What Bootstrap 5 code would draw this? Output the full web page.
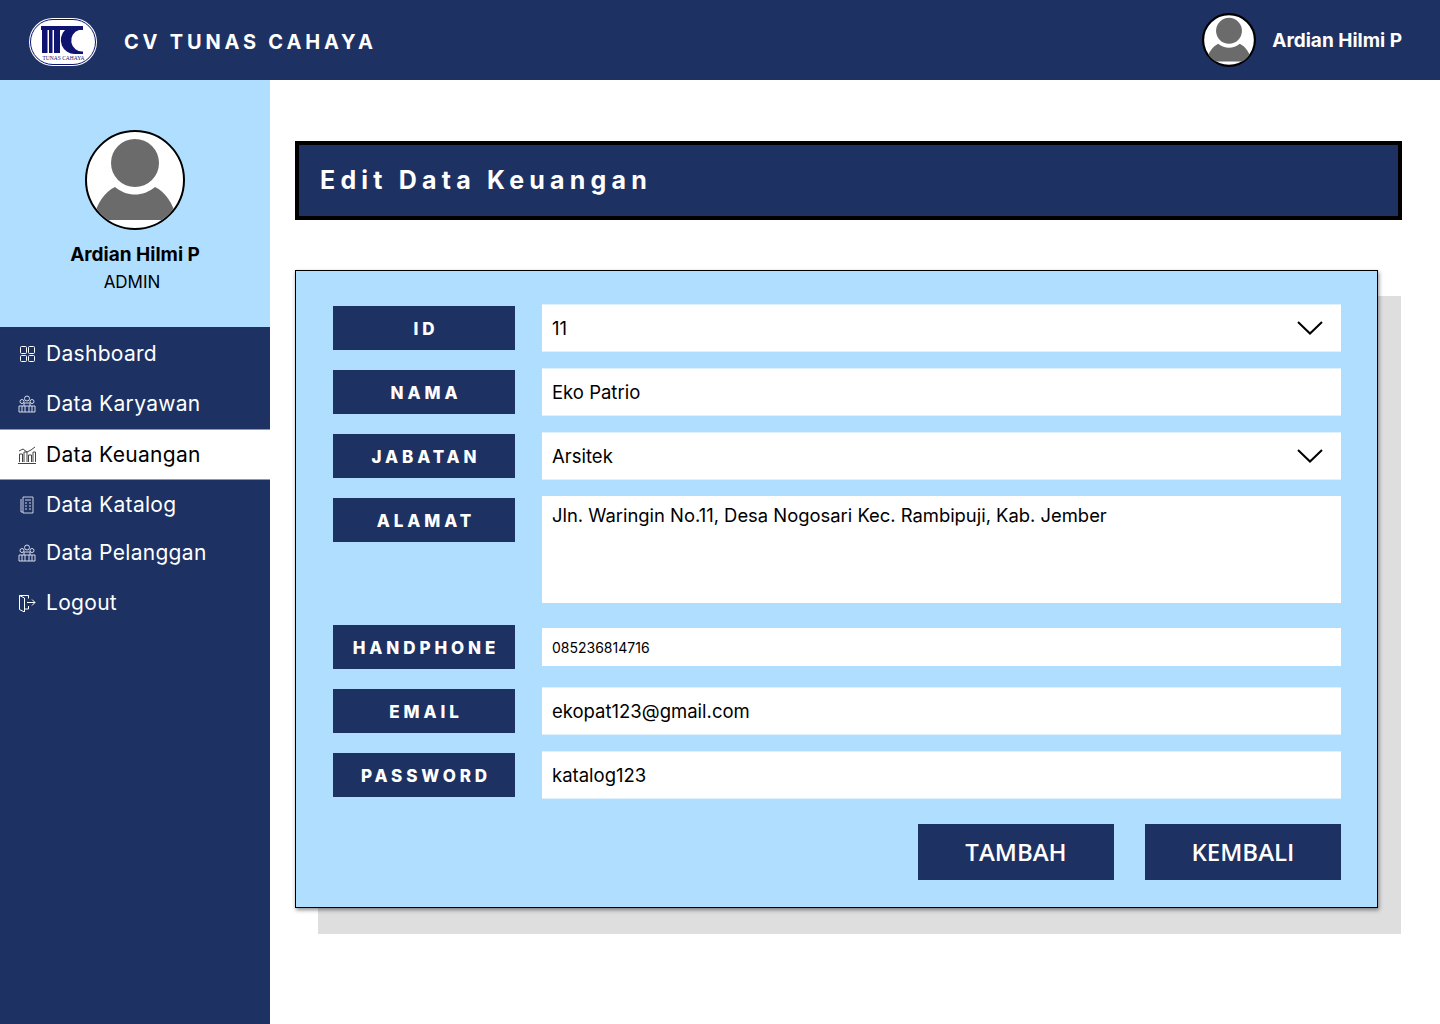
<!DOCTYPE html>
<html lang="en">
<head>
    <meta charset="UTF-8">
    <meta name="viewport" content="width=device-width, initial-scale=1.0">
    <title>Edit Data Keuangan</title>
    <link href="https://cdn.jsdelivr.net/npm/bootstrap@5.3.0/dist/css/bootstrap.min.css" rel="stylesheet">
    <style>
        body { font-family: Inter, "Noto Sans", sans-serif; background: #fff; color: #000; min-height: 1024px; }
        .top-bar { height: 80px; background: #1e3163; padding: 0 38px 0 29px; }
        .brand-logo { margin-top: 4px; }
        .brand-name { font-size: 20px; font-weight: 700; letter-spacing: 3.8px; margin: 4px 0 0 27px; color: #fff; }
        .top-user { font-size: 19px; font-weight: 700; color: #fff; margin-left: 16px; padding-top: 2px; }
        .side-bar { width: 270px; height: 944px; background: #1e3163; flex-shrink: 0; }
        .side-profile { height: 247px; background: #b0deff; padding-top: 50px; text-align: center; }
        .side-name { font-size: 19px; font-weight: 700; margin-top: 13px; line-height: 24px; }
        .side-role { font-size: 17px; line-height: 24px; margin-top: 3px; padding-right: 6px; }
        .side-link { height: 50px; padding-left: 18px; color: #fff; font-size: 21px; letter-spacing: .3px; text-decoration: none; gap: 10px; }
        .side-link:hover { color: #fff; }
        .side-link.active-link { background: #fff; color: #000; border-top: 1px solid #8c98b5; border-bottom: 1px solid #8c98b5; height: 51px; }
        .side-menu { padding-top: 2px; }
        .main-area { padding: 61px 38px 0 25px; }
        .page-title { height: 79px; background: #1e3163; border: 4px solid #000; color: #fff; font-size: 25px; font-weight: 700; letter-spacing: 5.2px; padding-left: 21px; }
        .form-panel { width: 1083px; height: 638px; margin-top: 50px; padding: 35px 36px 0 37px; background: #b0deff; border: 1px solid #000; box-shadow: 1px 2px 4px rgba(0,0,0,.45), 23px 26px 0 #dedede; }
        .form-line { height: 44px; margin-bottom: 20px; gap: 27px; }
        .form-line.tall { height: 105px; margin-bottom: 22px; }
        .field-label { width: 182px; height: 44px; flex-shrink: 0; padding: 4px 0 0 4px; background: #1e3163; color: #fff; font-size: 17px; font-weight: 800; letter-spacing: 3.9px; }
        .field-input { height: 48px; margin-top: -2px; border: solid #dff1ff; border-width: 1px 0; border-radius: 0; padding: 0 10px; font-size: 18.5px; color: #000; box-shadow: none; }
        .field-input.form-select { padding: 2px 48px 0 10px; background-position: right 18px center; background-size: 26px 14px; background-image: url("data:image/svg+xml,%3Csvg xmlns='http://www.w3.org/2000/svg' viewBox='0 0 26 14'%3E%3Cpath d='M1 1l12 11.500L25 1' fill='none' stroke='%23000' stroke-width='2'/%3E%3C/svg%3E"); }
        textarea.field-input { height: 107px; margin-top: -2px; padding-top: 6px; border: 0; resize: none; line-height: 26px; font-size: 18.4px; }
        .field-input.small-text { height: 38px; margin-top: 3px; border: 0; font-size: 14px; }
        .action-btn { width: 196px; height: 56px; background: #1e3163; color: #fff; border: 0; border-radius: 0; font-family: "Open Sans", sans-serif; font-size: 24px; font-weight: 600; }
        .action-btn:hover { background: #1e3163; color: #fff; }
        .action-row { gap: 31px; margin-top: 27px; }
    </style>
</head>
<body>
    <nav class="top-bar d-flex align-items-center">
        <svg class="brand-logo" width="68" height="48" viewBox="0 0 68 48">
            <rect x="0" y="0" width="68" height="48" rx="24" fill="#fff"/>
            <rect x="1.500" y="1.500" width="65" height="45" rx="22.500" fill="#fff" stroke="#0e1470"/>
            <rect x="12" y="8" width="42" height="4" fill="#0e1470"/>
            <path d="M13 12h5.500v23H13zM20 12h3.500v23H20zM25 12h6v23h-6z" fill="#0e1470"/>
            <path d="M36 12H50A11 11 0 0 0 54 33.500V36H46A14 14 0 0 1 36 12z" fill="#0e1470"/>
            <text x="34.500" y="42" text-anchor="middle" font-family="Liberation Serif, serif" font-size="5.500" fill="#0e1470">TUNAS CAHAYA</text>
        </svg>
        <span class="brand-name">CV TUNAS CAHAYA</span>
        <svg class="ms-auto" width="54" height="54" viewBox="0 0 100 100">
            <clipPath id="topClip"><circle cx="50" cy="50" r="47"/></clipPath>
            <circle cx="50" cy="50" r="48" fill="#fff" stroke="#000" stroke-width="4"/>
            <circle cx="50" cy="33" r="24" fill="#6b6b6b"/>
            <path clip-path="url(#topClip)" d="M30 57C42 67 58 67 70 57C80 62 88 72 92 90H8C12 72 20 62 30 57z" fill="#6b6b6b"/>
        </svg>
        <span class="top-user">Ardian Hilmi P</span>
    </nav>

    <div class="d-flex">
        <aside class="side-bar">
            <div class="side-profile">
                <svg width="100" height="100" viewBox="0 0 100 100" class="d-block mx-auto">
                    <clipPath id="sideClip"><circle cx="50" cy="50" r="48"/></clipPath>
                    <circle cx="50" cy="50" r="49" fill="#fff" stroke="#000" stroke-width="2"/>
                    <circle cx="50" cy="33" r="24" fill="#6b6b6b"/>
                    <path clip-path="url(#sideClip)" d="M30 57C42 67 58 67 70 57C80 62 88 72 92 90H8C12 72 20 62 30 57z" fill="#6b6b6b"/>
                </svg>
                <div class="side-name">Ardian Hilmi P</div>
                <div class="side-role">ADMIN</div>
            </div>
            <div class="side-menu">
                <a class="side-link d-flex align-items-center" href="#">
                    <svg width="18" height="18" viewBox="0 0 18 18" fill="none" stroke="#fff"><rect x="2.500" y="1.500" width="6" height="7" rx="1"/><rect x="10.500" y="1.500" width="6" height="7" rx="1"/><rect x="2.500" y="10.500" width="6" height="6" rx="1"/><rect x="10.500" y="10.500" width="6" height="6" rx="1"/></svg>
                    Dashboard
                </a>
                <a class="side-link d-flex align-items-center" href="#">
                    <svg width="18" height="18" viewBox="0 0 18 18" fill="none" stroke="#d5daea"><circle cx="9" cy="3.500" r="2.500"/><circle cx="4" cy="6.500" r="2"/><circle cx="14" cy="6.500" r="2"/><path d="M6 11V8h6v3M1 17v-6h16v6zM4 11v6M7 11v6M11 11v6M14 11v6"/></svg>
                    Data Karyawan
                </a>
                <a class="side-link active-link d-flex align-items-center" href="#">
                    <svg width="18" height="18" viewBox="0 0 18 18" fill="none" stroke="#444"><path d="M0 17.500h18M1.500 16V8h3v8M6 16V6h3v10M10.500 16V9h3v7M15 16V6h2.500v10M1 5l4-2 4 3 4-2 4-3"/></svg>
                    Data Keuangan
                </a>
                <a class="side-link d-flex align-items-center" href="#">
                    <svg width="18" height="18" viewBox="0 0 18 18" fill="none" stroke="#c9cfe0"><path d="M5 1h10v16H5zM3 3v13h2M7 4h6M7 7h2M11 7h2M7 10h2M11 10h2M7 13h2M11 13h2"/></svg>
                    Data Katalog
                </a>
                <a class="side-link d-flex align-items-center pb-1" href="#">
                    <svg width="18" height="18" viewBox="0 0 18 18" fill="none" stroke="#d5daea"><circle cx="9" cy="3.500" r="2.500"/><circle cx="4" cy="6.500" r="2"/><circle cx="14" cy="6.500" r="2"/><path d="M6 11V8h6v3M1 17v-6h16v6zM4 11v6M7 11v6M11 11v6M14 11v6"/></svg>
                    Data Pelanggan
                </a>
                <a class="side-link d-flex align-items-center pb-1" href="#">
                    <svg width="18" height="18" viewBox="0 0 18 18" fill="none" stroke="#fff"><path d="M1.500 1.500h9v3M10.500 12v3h-4M1.500 1.500v14l5 2.500V4L1.500 1.500M9 8.500h8M14 5.500l3 3-3 3"/></svg>
                    Logout
                </a>
            </div>
        </aside>

        <main class="main-area flex-grow-1">
            <div class="page-title d-flex align-items-center">Edit Data Keuangan</div>
            <form class="form-panel">
                <div class="form-line d-flex">
                    <label class="field-label d-flex align-items-center justify-content-center">ID</label>
                    <select class="form-select field-input"><option>11</option></select>
                </div>
                <div class="form-line d-flex">
                    <label class="field-label d-flex align-items-center justify-content-center">NAMA</label>
                    <input class="form-control field-input" value="Eko Patrio">
                </div>
                <div class="form-line d-flex">
                    <label class="field-label d-flex align-items-center justify-content-center">JABATAN</label>
                    <select class="form-select field-input"><option>Arsitek</option></select>
                </div>
                <div class="form-line tall d-flex">
                    <label class="field-label d-flex align-items-center justify-content-center">ALAMAT</label>
                    <textarea class="form-control field-input">Jln. Waringin No.11, Desa Nogosari Kec. Rambipuji, Kab. Jember</textarea>
                </div>
                <div class="form-line d-flex">
                    <label class="field-label d-flex align-items-center justify-content-center">HANDPHONE</label>
                    <input class="form-control field-input small-text" value="085236814716">
                </div>
                <div class="form-line d-flex">
                    <label class="field-label d-flex align-items-center justify-content-center">EMAIL</label>
                    <input class="form-control field-input" value="ekopat123@gmail.com">
                </div>
                <div class="form-line d-flex">
                    <label class="field-label d-flex align-items-center justify-content-center">PASSWORD</label>
                    <input class="form-control field-input" value="katalog123">
                </div>
                <div class="action-row d-flex justify-content-end">
                    <button type="button" class="btn action-btn">TAMBAH</button>
                    <button type="button" class="btn action-btn">KEMBALI</button>
                </div>
            </form>
        </main>
    </div>

    <script src="https://cdn.jsdelivr.net/npm/bootstrap@5.3.0/dist/js/bootstrap.bundle.min.js"></script>
</body>
</html>
